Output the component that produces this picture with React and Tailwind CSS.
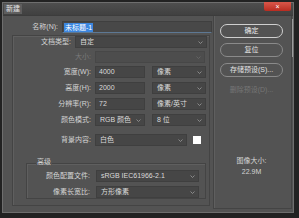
import React from 'react';

const Chevron = () => (
  <svg width="5" height="3" viewBox="0 0 5 3" className="shrink-0">
    <path d="M0.5 0.5 L2.5 2.5 L4.5 0.5" stroke="#9a9a9a" fill="none" strokeWidth="0.8" />
  </svg>
);

const Select = ({ className, children }) => (
  <div className={`flex items-center justify-between h-[12px] bg-[#464646] border border-[#3f3f3f] pl-[4px] pr-[3px] text-[#dadada] ${className}`}>
    <span className="leading-[10px]">{children}</span>
    <Chevron />
  </div>
);

const Input = ({ className, children }) => (
  <div className={`flex items-center h-[12px] bg-[#464646] border border-[#3f3f3f] pl-[3px] text-[#dadada] ${className}`}>
    <span className="leading-[10px]">{children}</span>
  </div>
);

const Label = ({ className, children }) => (
  <div className={`text-right pr-[2px] leading-[12px] text-[#d4d4d4] ${className}`}>{children}</div>
);

const Button = ({ className, children }) => (
  <div className={`flex items-center justify-center w-[63px] h-[14px] rounded-full border ${className}`}>
    {children}
  </div>
);

export default function App() {
  return (
    <div className="w-[299px] h-[218px] bg-[#222222] overflow-hidden pt-[2px] pl-[2px] font-['Liberation_Sans','Noto_Sans_CJK_SC',sans-serif] text-[7px]">
      <div className="w-[292px] h-[211px] border border-[#6e6e6e] flex flex-col">
        {/* title bar */}
        <div className="h-[12px] flex items-start bg-gradient-to-b from-[#4e4e4e] to-[#404040]">
          <div className="ml-[1px] mt-[1px] h-[10px] px-[2px] bg-[#5e5e5e] text-[#e4e4e4] leading-[10px]">新建</div>
          <div className="ml-auto mr-[2px] mt-[-1px] w-[27px] h-[9px] rounded-b-[2px] bg-gradient-to-b from-[#d9574a] to-[#b92b20] flex items-center justify-center text-white text-[7px] leading-[9px]">×</div>
        </div>

        {/* body */}
        <div className="flex-1 flex bg-[#535353] border-t border-[#3c3c3c]">
          {/* left */}
          <div className="w-[210px] flex flex-col">
            <div className="mt-[5px] flex items-center h-[12px]">
              <Label className="w-[57px]">名称(N):</Label>
              <div className="ml-[2px] w-[150px] h-[12px] bg-[#484848] border border-[#3f3f3f] border-b-[#5d7894] flex items-center pl-[1px]">
                <span className="bg-[#3b86df] text-white px-[1px] leading-[9px]">未标题-1</span>
              </div>
            </div>

            <div className="mt-[2px] ml-[9px] w-[198px] h-[171px] border border-[#444444] shadow-[inset_1px_1px_0_#5f5f5f] flex flex-col">
              <div className="flex items-center h-[12px]">
                <Label className="w-[60px]">文档类型:</Label>
                <Select className="ml-[2px] w-[132px]">自定</Select>
              </div>
              <div className="mt-[3px] flex items-center h-[12px]">
                <Label className="w-[80px] !text-[#7a7a7a]">大小:</Label>
                <div className="ml-[2px] w-[110px] h-[12px] bg-[#4d4d4d] border border-[#474747] flex items-center justify-end pr-[3px]">
                  <svg width="5" height="3" viewBox="0 0 5 3"><path d="M0.5 0.5 L2.5 2.5 L4.5 0.5" stroke="#6a6a6a" fill="none" strokeWidth="0.8" /></svg>
                </div>
              </div>
              <div className="mt-[3px] flex items-center h-[12px]">
                <Label className="w-[80px]">宽度(W):</Label>
                <Input className="ml-[2px] w-[50px]">4000</Input>
                <Select className="ml-[7px] w-[54px]">像素</Select>
              </div>
              <div className="mt-[4px] flex items-center h-[12px]">
                <Label className="w-[80px]">高度(H):</Label>
                <Input className="ml-[2px] w-[50px]">2000</Input>
                <Select className="ml-[7px] w-[54px]">像素</Select>
              </div>
              <div className="mt-[4px] flex items-center h-[12px]">
                <Label className="w-[80px]">分辨率(R):</Label>
                <Input className="ml-[2px] w-[50px]">72</Input>
                <Select className="ml-[7px] w-[54px]">像素/英寸</Select>
              </div>
              <div className="mt-[4px] flex items-center h-[12px]">
                <Label className="w-[80px]">颜色模式:</Label>
                <Select className="ml-[2px] w-[50px]">RGB 颜色</Select>
                <Select className="ml-[7px] w-[54px]">8 位</Select>
              </div>
              <div className="mt-[8px] flex items-center h-[12px]">
                <Label className="w-[80px]">背景内容:</Label>
                <Select className="ml-[2px] w-[92px]">白色</Select>
                <div className="ml-[6px] w-[8px] h-[8px] bg-white"></div>
              </div>

              <div className="mt-[9px] ml-[13px] w-[180px] h-[44px] flex flex-col">
                <div className="h-[8px] flex items-end">
                  <span className="ml-[10px] leading-[8px] text-[#d4d4d4] translate-y-[3px] bg-[#535353] px-[1px]">高级</span>
                </div>
                <div className="flex-1 border border-[#444444] shadow-[inset_1px_1px_0_#5f5f5f] flex flex-col pt-[6px]">
                  <div className="flex items-center h-[12px]">
                    <Label className="w-[65px]">颜色配置文件:</Label>
                    <Select className="ml-[4px] w-[103px]">sRGB IEC61966-2.1</Select>
                  </div>
                  <div className="mt-[4px] flex items-center h-[12px]">
                    <Label className="w-[65px]">像素长宽比:</Label>
                    <Select className="ml-[4px] w-[103px]">方形像素</Select>
                  </div>
                </div>
              </div>
            </div>
          </div>

          {/* right */}
          <div className="w-[79px] mb-[3px] border-l border-r border-b border-[#444444] shadow-[inset_1px_0_0_#5f5f5f] flex flex-col pl-[6px]">
            <Button className="mt-[8px] border-[#cfcfcf] text-[#ededed]">确定</Button>
            <Button className="mt-[5px] border-[#8a8a8a] text-[#e2e2e2]">复位</Button>
            <Button className="mt-[6px] border-[#8a8a8a] text-[#e2e2e2]">存储预设(S)...</Button>
            <Button className="mt-[6px] border-transparent text-[#767676]">删除预设(D)...</Button>
            <div className="mt-[58px] w-[63px] text-center text-[#d4d4d4] leading-[11px]">
              <div>图像大小:</div>
              <div>22.9M</div>
            </div>
          </div>
          <div className="w-[1px] flex flex-col">
            <div className="mt-[3px] h-[38px] bg-[#9c9c9c]"></div>
          </div>
        </div>
      </div>
    </div>
  );
}
